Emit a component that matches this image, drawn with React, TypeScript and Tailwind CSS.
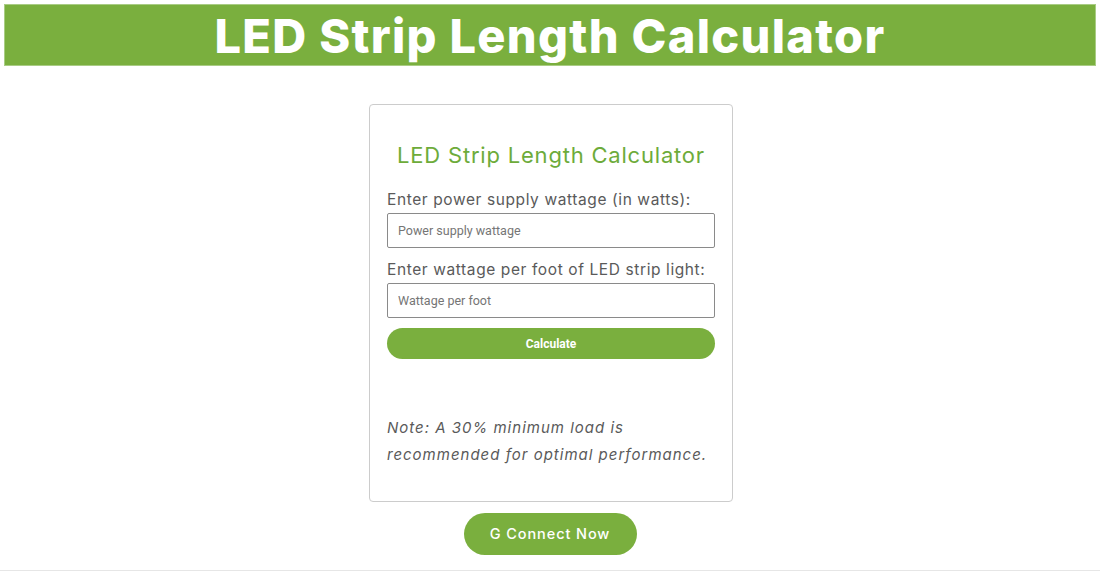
import { useState } from 'react';

const poppinsLike = { fontFamily: 'Inter, "Open Sans", sans-serif' };

const App = () => {
  const [watts, setWatts] = useState('');
  const [perFoot, setPerFoot] = useState('');
  const [result, setResult] = useState('');

  const handleCalculate = () => {
    const w = parseFloat(watts);
    const p = parseFloat(perFoot);
    if (!w || !p) {
      setResult('');
      return;
    }
    // keep a 30% headroom on the supply
    const feet = (w * 0.7) / p;
    setResult(`Maximum length: ${feet.toFixed(1)} ft`);
  };

  return (
    <div className="min-h-[584px] bg-white" style={poppinsLike}>
      <div className="pt-[4px] px-[4px]">
        <h1 className="h-[62px] flex items-center justify-center bg-[#7aaf3e] border border-[#a9cc84] text-white text-[47px] font-extrabold tracking-[1.3px] leading-none">
          LED Strip Length Calculator
        </h1>
      </div>

      <div className="flex flex-col items-center">
        <div className="mt-[38px] ml-[2px] w-[364px] border border-[#cccccc] rounded-[4px] px-[17px] pt-[35px] pb-[33px]">
          <h2 className="h-[30px] leading-[30px] text-center text-[22px] text-[#6dab3a] tracking-[0.8px]">
            LED Strip Length Calculator
          </h2>

          <label className="block mt-[18px] h-[25px] leading-[24px] text-[15.5px] text-[#5a5a5a] tracking-[0.6px]">
            Enter power supply wattage (in watts):
          </label>
          <input
            type="number"
            value={watts}
            onChange={(e) => setWatts(e.target.value)}
            placeholder="Power supply wattage"
            className="block w-full h-[35px] border border-[#8a8a8a] rounded-[2px] px-[10px] text-[12.5px] text-[#333] placeholder:text-[#757575] outline-none"
            style={{ fontFamily: 'Roboto, Arial, sans-serif' }}
          />

          <label className="block mt-[10px] h-[25px] leading-[24px] text-[15.5px] text-[#5a5a5a] tracking-[0.6px]">
            Enter wattage per foot of LED strip light:
          </label>
          <input
            type="number"
            value={perFoot}
            onChange={(e) => setPerFoot(e.target.value)}
            placeholder="Wattage per foot"
            className="block w-full h-[35px] border border-[#8a8a8a] rounded-[2px] px-[10px] text-[12.5px] text-[#333] placeholder:text-[#757575] outline-none"
            style={{ fontFamily: 'Roboto, Arial, sans-serif' }}
          />

          <button
            onClick={handleCalculate}
            className="mt-[10px] w-full h-[31px] rounded-full bg-[#7aaf3e] text-white text-[12px] font-bold"
            style={{ fontFamily: 'Roboto, Arial, sans-serif' }}
          >
            Calculate
          </button>

          <div className="h-[55px] flex items-center text-[14px] text-[#555]">{result}</div>

          <p className="italic text-[15px] leading-[27px] text-[#5a5a5a] tracking-[1px]">
            Note: A 30% minimum load is recommended for optimal performance.
          </p>
        </div>

        <button className="mt-[11px] w-[173px] h-[42px] rounded-full bg-[#7aaf3e] text-white text-[14.5px] font-medium tracking-[0.9px]">
          G Connect Now
        </button>
      </div>

      <div className="mt-[15px] h-px bg-[#e6e6e6]" />
    </div>
  );
};

export default App;
